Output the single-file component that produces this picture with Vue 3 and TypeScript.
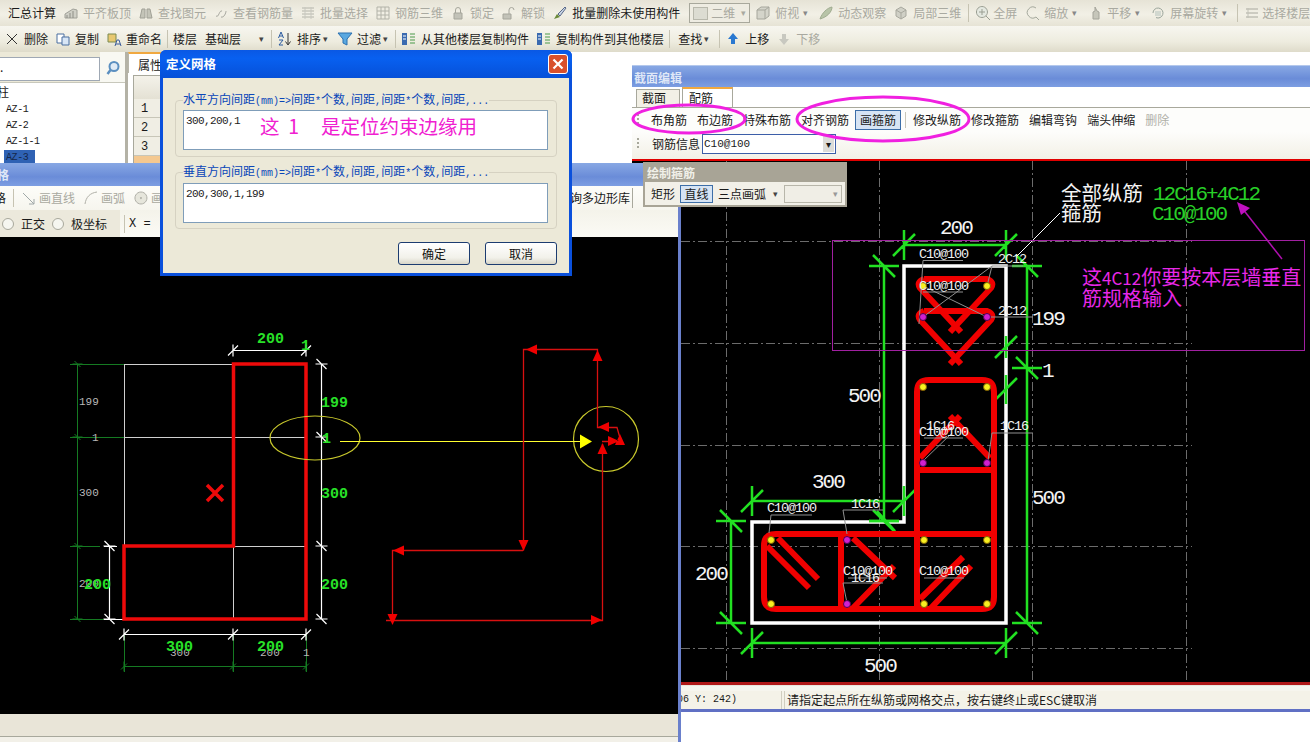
<template>
  <div class="app">
    <!-- top toolbars -->
    <div class="bar bar1">
      <template v-for="(it, i) in bar1" :key="i">
        <span v-if="it.sep" class="sep"></span>
        <span v-else-if="it.combo" class="combo"><i class="combo-box"></i>{{ it.label }}<i class="combo-arrow">▾</i></span>
        <span v-else class="item" :class="{ off: it.off, tight: it.tight }">
          <svg v-if="it.icon" class="ico" viewBox="0 0 16 16"><path v-for="(p, k) in icons[it.icon]" :key="k" :d="p.d" :fill="p.f || 'none'" :stroke="p.s || 'none'" /></svg>
          <span>{{ it.label }}</span>
          <i v-if="it.caret" class="caret">▾</i>
        </span>
      </template>
    </div>
    <div class="bar bar2">
      <template v-for="(it, i) in bar2" :key="i">
        <span v-if="it.sep" class="sep"></span>
        <span v-else-if="it.combo" class="floor">{{ it.label }}<i class="caret">▾</i></span>
        <span v-else class="item" :class="{ off: it.off, wide: it.wide }">
          <svg v-if="it.icon" class="ico" viewBox="0 0 16 16"><path v-for="(p, k) in icons[it.icon]" :key="k" :d="p.d" :fill="p.f || 'none'" :stroke="p.s || 'none'" /></svg>
          <span>{{ it.label }}</span>
          <i v-if="it.caret" class="caret">▾</i>
        </span>
      </template>
    </div>

    <div class="desk">
      <!-- component list -->
      <div class="list-pane">
        <div class="search">
          <div class="search-box">.</div>
          <svg class="lens" viewBox="0 0 16 16"><circle cx="9" cy="6.5" r="4.5" fill="#dfeaf5" stroke="#5b8fc0" stroke-width="2" /><path d="M5.5 10 2.5 14" stroke="#5b8fc0" stroke-width="2.5" /></svg>
        </div>
        <div class="tree">
          <div class="root">柱</div>
          <div v-for="n in ['AZ-1', 'AZ-2', 'AZ-1-1']" :key="n" class="leaf">{{ n }}</div>
          <div class="leaf"><span class="picked">AZ-3</span></div>
        </div>
      </div>

      <!-- properties tab behind the dialog -->
      <div class="props">
        <div class="props-tab">属性</div>
        <div class="props-grid">
          <div class="props-head"></div>
          <div v-for="n in 3" :key="n" class="props-row">{{ n }}</div>
          <div class="props-row now"></div>
        </div>
      </div>

      <!-- section editor -->
      <div class="section-win">
        <div class="title sec-title">截面编辑</div>
        <div class="tabs">
          <span class="tab">截面</span>
          <span class="tab on">配筋</span>
        </div>
        <div class="sec-tools">
          <i class="grip"></i>
          <span v-for="t in secTools" :key="t.label" class="tool" :class="{ off: t.off, act: t.act, dash: t.dash }">{{ t.label }}</span>
        </div>
        <div class="sec-info">
          <i class="grip"></i>
          <span>钢筋信息</span>
          <span class="rebar-sel"><span class="mono">C10@100</span><i class="sel-btn">▾</i></span>
        </div>
        <div class="red-line"></div>
        <svg class="cad sec-cad" viewBox="632 160 678 521">
          <path :d="gridPath" class="grid" />
          <path :d="whiteOutline" class="wall" />
          <path :d="greenDims" class="dim-g" />
          <path d="M995 357 1017 335M995 399 1017 377M1006 335V357M1006 374V403M869 520H899M877 510 895 530" class="dim-g" />
          <path :d="rebarPath" class="rebar" />
          <path :d="leaderPath" class="leader" />
          <path d="M1017 255 1060 212" class="white-thin" />
          <g v-for="(d, i) in secDots" :key="i">
            <circle :cx="d[0]" :cy="d[1]" r="3.5" :class="d[2] ? 'dot-p' : 'dot-y'" />
          </g>
          <rect x="832.5" y="239.5" width="472" height="110" class="note-box" />
          <path d="M1282 258 1242 207" class="note-line" />
          <path d="M1237 201 1250 207 1241 214Z" fill="#c010c0" />
          <text v-for="(t, i) in secText" :key="i" :x="t.x" :y="t.y" :class="t.c">{{ t.t }}</text>
          <text x="1061" y="200" class="cjk-w">全部纵筋</text>
          <text x="1061" y="220" class="cjk-w">箍筋</text>
          <text x="1082" y="284" class="cjk-m">这<tspan class="cjk-lat">4C12</tspan>你要按本层墙垂直</text>
          <text x="1082" y="305" class="cjk-m">筋规格输入</text>
        </svg>
        <div class="red-end"></div>
        <div class="status">
          <span class="st-pos mono">(X: 306 Y: 242)</span>
          <span class="st-msg">请指定起点所在纵筋或网格交点，按右键终止或ESC键取消</span>
        </div>
      </div>

      <!-- floating stirrup palette -->
      <div class="palette">
        <div class="pal-title">绘制箍筋</div>
        <div class="pal-body">
          <span>矩形</span>
          <span class="pal-act">直线</span>
          <span>三点画弧</span>
          <i class="caret">▾</i>
          <span class="pal-sel">▾</span>
        </div>
      </div>

      <!-- polygon editor -->
      <div class="draw-win">
        <div class="title draw-title">格</div>
        <div class="draw-tools">
          <span class="cut">格</span>
          <span class="sep"></span>
          <span v-for="t in drawTools" :key="t.label" class="item off">
            <svg class="ico" viewBox="0 0 16 16"><path v-for="(p, k) in icons[t.icon]" :key="k" :d="p.d" :fill="p.f || 'none'" :stroke="p.s || 'none'" /></svg>
            <span>{{ t.label }}</span>
          </span>
          <span class="grow"></span>
          <span class="poly-lib">查询多边形库</span>
        </div>
        <div class="draw-opts">
          <span class="opts-left">
            <i class="radio"></i><span>正交</span>
            <i class="radio"></i><span>极坐标</span>
          </span>
          <span class="sep"></span>
          <span class="mono">X =</span>
          <i class="coord"></i>
        </div>
        <svg class="cad draw-cad" viewBox="0 237 678 477">
          <path d="M124.500 364V546M233.500 546V619M124 364.500H233M124 437.500H306M233 546.500H306" class="grey-line" />
          <path d="M70 364.500H124M70 437.500H124M70 546.500H100M70 619.500H104M124.500 634V672M233.500 634V672M306.500 634V672" class="dark-line" />
          <path :d="darkDims" class="dark-line" />
          <path :d="whiteDims" class="white-line" />
          <path d="M104 546.500H117M104 619.500H124" class="white-line" />
          <path d="M233.500 364H306V619H124V546H233.500Z" class="outline" />
          <path d="M207 485 223 501M223 485 207 501" class="outline" />
          <ellipse cx="315" cy="438" rx="45" ry="22" class="yellow-ring" />
          <circle cx="606" cy="439" r="32.500" class="yellow-ring" />
          <path d="M340 441.500H582" class="yellow-arrow" />
          <path d="M592 441.500 580 434.500V448.500Z" fill="#ffff00" />
          <path :d="loopPath" class="loop" />
          <path :d="loopHeads" fill="#f00000" />
          <text v-for="(t, i) in drawText" :key="i" :x="t.x" :y="t.y" :class="t.c">{{ t.t }}</text>
        </svg>
        <div class="draw-foot"></div>
      </div>

      <!-- hand drawn rings over the section toolbar -->
      <svg class="rings" viewBox="0 0 1310 690">
        <ellipse cx="689" cy="67" rx="56" ry="14" />
        <ellipse cx="883" cy="67" rx="86" ry="22" />
      </svg>

      <!-- define grid dialog -->
      <div class="dialog">
        <div class="dlg-title">
          <span>定义网格</span>
          <span class="dlg-close">
            <svg viewBox="0 0 12 12"><path d="M1.500 1.500 10.500 10.500M10.500 1.500 1.500 10.500" stroke="#fff" stroke-width="2.200" /></svg>
          </span>
        </div>
        <div class="dlg-body">
          <fieldset class="grp">
            <legend><span v-for="(p, i) in legendParts('水平方向间距(mm)=>间距*个数,间距,间距*个数,间距,...')" :key="i" :class="{ lat: p.lat }">{{ p.text }}</span></legend>
            <div class="memo">
              <span class="mono memo-text">300,200,1</span>
              <span class="memo-note">这&nbsp;&nbsp;1&nbsp;&nbsp;&nbsp;&nbsp;&nbsp;是定位约束边缘用</span>
            </div>
          </fieldset>
          <fieldset class="grp">
            <legend><span v-for="(p, i) in legendParts('垂直方向间距(mm)=>间距*个数,间距,间距*个数,间距,...')" :key="i" :class="{ lat: p.lat }">{{ p.text }}</span></legend>
            <div class="memo">
              <span class="mono memo-text">200,300,1,199</span>
            </div>
          </fieldset>
          <div class="dlg-btns">
            <button type="button">确定</button>
            <button type="button">取消</button>
          </div>
        </div>
      </div>
    </div>
  </div>
</template>

<script setup lang="ts">
import { computed } from 'vue'

interface Shape { d: string; f?: string; s?: string }
interface BarItem {
  label?: string
  icon?: string
  off?: boolean
  caret?: boolean
  sep?: boolean
  combo?: boolean
  tight?: boolean
  wide?: boolean
}

// small hand drawn toolbar icons, 16x16
const icons: Record<string, Shape[]> = {
  slab: [{ d: 'M2 13V9l8-5 4 1v8Z', f: '#cfcfc6', s: '#a0a098' }, { d: 'M4 13V10M7 13V8M10 13V6', s: '#8e8e86' }],
  binoc: [{ d: 'M2 13l2-9h3v9ZM9 13V4h3l2 9Z', f: '#c4c4b8', s: '#a0a096' }],
  rebar: [{ d: 'M3 11c3 2 3-6 6-5M8 12c3 1 5-4 5-6', s: '#a8a8a0' }],
  list: [{ d: 'M2 3h12M2 6h12M2 9h12M2 12h12', s: '#b4b4aa' }, { d: 'M5 2v12M11 2v12', s: '#c8c8c0' }],
  cube: [{ d: 'M2 2h12v12H2ZM6 2v12M10 2v12M2 6h12M2 10h12', s: '#b2b2a8' }],
  lock: [{ d: 'M4 8h8v6H4Z', f: '#c2c2b8', s: '#a6a69c' }, { d: 'M5.500 8V5a2.500 2.500 0 0 1 5 0v3', s: '#a6a69c' }],
  unlock: [{ d: 'M2 9h8v5H2Z', f: '#c2c2b8', s: '#a6a69c' }, { d: 'M8 9V5a2.500 2.500 0 0 1 5 0', s: '#a6a69c' }],
  brush: [{ d: 'M2 14l3-5 3 3Z', f: '#6a8a3a' }, { d: 'M6 9l7-7 1 1-6 8Z', f: '#c8d4e4', s: '#5a6a8a' }],
  box: [{ d: 'M2 5l4-3h8v9l-4 3H2Z', f: '#d4d4ca', s: '#a6a69c' }, { d: 'M2 5h8v9M10 5l4-3', s: '#a6a69c' }],
  orbit: [{ d: 'M2 14C4 8 9 3 14 2c0 5-5 10-12 12Z', f: '#b8c4a8', s: '#a0ac90' }],
  part: [{ d: 'M8 2l5 3v6l-5 3-5-3V5Z', f: '#d0d0c6', s: '#a8a89e' }, { d: 'M3 5l5 3 5-3M8 8v6', s: '#a8a89e' }],
  zoomfull: [{ d: 'M7 1.500a5.500 5.500 0 1 1-.1 0Z', f: '#e4e8e0', s: '#9a9e92' }, { d: 'M7 4v6M4 7h6M11 11l4 4', s: '#9a9e92' }],
  zoom: [{ d: 'M12 3a5.500 5.500 0 1 0 0 9', s: '#a4a89c' }, { d: 'M12 12l3 3', s: '#a4a89c' }],
  pan: [{ d: 'M6 14V7l2-1V2l2 4 2 1v7Z', f: '#c6c6ba', s: '#a4a49a' }],
  rotate: [{ d: 'M3 8a5 5 0 1 1 3 4.600', s: '#9aa49a' }, { d: 'M5 6h6v5H5Z', f: '#d2d8d0' }],
  floor: [{ d: 'M2 4h12M2 8h12M2 12h12', s: '#a8a89e' }, { d: 'M4 3v10', s: '#c2c2b8' }],
  cross: [{ d: 'M3 3l10 10M13 3 3 13', s: '#333333' }],
  copy: [{ d: 'M2 3h7v9H2Z', f: '#fff', s: '#4a6ea0' }, { d: 'M7 6h7v8H7Z', f: '#d8e6f6', s: '#4a6ea0' }],
  rename: [{ d: 'M2 3h8v8H2Z', f: '#e8c870', s: '#7a8a50' }, { d: 'M9 15l2-6 2 0 2 6M10 13h4', s: '#3a5a9a' }],
  sort: [{ d: 'M1.500 7 4 1l2.500 6M2.500 5h3M2 9h4l-4 5h4', s: '#2a5aa0' }, { d: 'M11 2v11M8.500 10.500 11 14l2.500-3.500', s: '#333333' }],
  funnel: [{ d: 'M1 2h14L10 8v6l-4-2V8Z', f: '#5aa8e0', s: '#2a70b0' }],
  layers: [{ d: 'M1 2h5v12H1Z', f: '#3a6ab0' }, { d: 'M2 5h3M2 8h3', s: '#fff' }, { d: 'M9 3h5M9 6h5M9 9h5M9 12h5', s: '#4a9a4a' }],
  up: [{ d: 'M8 2l5 6h-3v5H6V8H3Z', f: '#2a78d0' }],
  down: [{ d: 'M8 14 3 8h3V3h4v5h3Z', f: '#c8c8c0' }],
  line: [{ d: 'M2 3l11 11M13 14v-5M13 14H8', s: '#a0a8a8' }],
  arc: [{ d: 'M2 14C3 7 7 3 14 2', s: '#b0b0a8', }],
  circle: [{ d: 'M8 2a6 6 0 1 1-.1 0Z', f: '#e6e6dc', s: '#b0b0a8' }, { d: 'M8 7a1 1 0 1 1-.1 0Z', f: '#b0b0a8' }],
}

const bar1: BarItem[] = [
  { label: '汇总计算' },
  { label: '平齐板顶', icon: 'slab', off: true },
  { label: '查找图元', icon: 'binoc', off: true },
  { label: '查看钢筋量', icon: 'rebar', off: true },
  { label: '批量选择', icon: 'list', off: true },
  { label: '钢筋三维', icon: 'cube', off: true },
  { label: '锁定', icon: 'lock', off: true },
  { label: '解锁', icon: 'unlock', off: true },
  { label: '批量删除未使用构件', icon: 'brush' },
  { label: '二维', combo: true },
  { label: '俯视', icon: 'box', off: true, caret: true },
  { label: '动态观察', icon: 'orbit', off: true },
  { label: '局部三维', icon: 'part', off: true },
  { sep: true },
  { label: '全屏', icon: 'zoomfull', off: true, tight: true },
  { label: '缩放', icon: 'zoom', off: true, caret: true },
  { label: '平移', icon: 'pan', off: true, caret: true },
  { label: '屏幕旋转', icon: 'rotate', off: true, caret: true },
  { sep: true },
  { label: '选择楼层', icon: 'floor', off: true, tight: true },
]

const bar2: BarItem[] = [
  { label: '删除', icon: 'cross' },
  { label: '复制', icon: 'copy' },
  { label: '重命名', icon: 'rename' },
  { sep: true },
  { label: '楼层' },
  { label: '基础层', combo: true },
  { sep: true },
  { label: '排序', icon: 'sort', caret: true },
  { label: '过滤', icon: 'funnel', caret: true },
  { sep: true },
  { label: '从其他楼层复制构件', icon: 'layers' },
  { label: '复制构件到其他楼层', icon: 'layers' },
  { sep: true },
  { label: '查找', caret: true, wide: true },
  { sep: true },
  { label: '上移', icon: 'up' },
  { label: '下移', icon: 'down', off: true },
]

const secTools = [
  { label: '布角筋' },
  { label: '布边筋' },
  { label: '特殊布筋' },
  { label: '对齐钢筋' },
  { label: '画箍筋', act: true },
  { label: '修改纵筋', dash: true },
  { label: '修改箍筋' },
  { label: '编辑弯钩' },
  { label: '端头伸缩' },
  { label: '删除', off: true },
]

const drawTools = [
  { label: '画直线', icon: 'line' },
  { label: '画弧', icon: 'arc' },
  { label: '画圆', icon: 'circle' },
]

// legends mix half width latin with chinese, the latin runs get their own class
const legendParts = (s: string) =>
  (s.match(/[\x00-\x7f]+|[^\x00-\x7f]+/g) || []).map((text) => ({
    text,
    lat: text.charCodeAt(0) < 128,
  }))

interface Dim { axis: 'h' | 'v'; at: number; stops: number[] }

// a dimension line with a cross tick at every stop
const dimPath = (dims: Dim[], ext: number, slash: number) =>
  dims
    .map((d) => {
      const a = d.stops[0]
      const b = d.stops[d.stops.length - 1]
      if (d.axis === 'h') {
        return `M${a} ${d.at}H${b}` + d.stops
          .map((s) => `M${s} ${d.at - ext}V${d.at + ext}M${s - slash} ${d.at + slash}L${s + slash} ${d.at - slash}`)
          .join('')
      }
      return `M${d.at} ${a}V${b}` + d.stops
        .map((s) => `M${d.at - ext} ${s}H${d.at + ext}M${d.at - slash} ${s - slash}L${d.at + slash} ${s + slash}`)
        .join('')
    })
    .join('')

const greenDims = computed(() =>
  dimPath(
    [
      { axis: 'h', at: 244, stops: [904, 1006] },
      { axis: 'v', at: 884, stops: [265, 520] },
      { axis: 'v', at: 1027, stops: [265, 367, 622] },
      { axis: 'v', at: 731, stops: [520, 622] },
      { axis: 'h', at: 500, stops: [752, 904] },
      { axis: 'h', at: 642, stops: [752, 1006] },
    ],
    15,
    11,
  ),
)

const whiteDims = computed(() =>
  dimPath(
    [
      { axis: 'v', at: 321.5, stops: [364, 437, 546, 619] },
      { axis: 'v', at: 109.5, stops: [546, 619] },
      { axis: 'h', at: 350.5, stops: [233, 306] },
      { axis: 'h', at: 634.5, stops: [124, 233, 306] },
    ],
    6,
    5,
  ),
)

const darkDims = computed(() =>
  dimPath(
    [
      { axis: 'v', at: 77.5, stops: [364, 437, 546, 619] },
      { axis: 'h', at: 666.5, stops: [124, 233, 306] },
    ],
    5,
    3,
  ),
)

const gridPath = computed(() => {
  let d = ''
  for (const x of [726.5, 879.5, 1032.5, 1186.5]) d += `M${x} 160V681`
  for (const y of [240.5, 342.5, 444.5, 545.5, 647.5]) d += `M681 ${y}H1192`
  return d
})

const whiteOutline = 'M904 265H1006V622H752V521H904Z'

const rebarPath = [
  // L shaped outer stirrup with the cross walls
  'M917 533V391Q917 379 929 379H982Q994 379 994 391V596Q994 608 982 608H776Q764 608 764 596V545Q764 533 776 533H994',
  'M917 533V608M841 533V608M917 469H994',
  // upper stirrups
  'M924 278H987Q995 281 991 287L950 331M924 278Q916 281 920 287L961 331',
  'M924 310H987Q995 313 991 319L950 363M924 310Q916 313 920 319L961 363',
  // hooks
  'M920 457 960 415M990 457 950 415',
  'M778 537 818 578M767 545 809 587',
  'M853 537 895 577M853 607 894 565',
  'M920 598 963 556M930 608 971 565',
].join('')

const leaderPath = [
  'M963 259.500H923L919 323',
  'M963 291H923M923 285 987 316',
  'M1023 265H992L923 316M992 265 987 285',
  'M1033 316H987',
  'M1033 432H992L988 460',
  'M963 437H924M952 432 923 460',
  'M812 514H771L769 532',
  'M883 509H843L847 533',
  'M887 577H848',
  'M883 582H843L847 602',
  'M964 577H924',
].join('')

// [x, y, isPurple]
const secDots: [number, number, boolean][] = [
  [923, 285, false], [987, 285, false], [923, 316, true], [987, 316, true],
  [923, 386, false], [987, 386, false], [923, 462, true], [987, 462, true],
  [771, 539, false], [771, 603, false], [847, 539, true], [847, 603, true],
  [924, 539, false], [987, 539, false], [924, 603, false], [987, 603, false],
]

const secText = [
  { x: 940, y: 233, t: '200', c: 'big' },
  { x: 1032, y: 324, t: '199', c: 'big' },
  { x: 1042, y: 376, t: '1', c: 'big' },
  { x: 848, y: 401, t: '500', c: 'big' },
  { x: 812, y: 487, t: '300', c: 'big' },
  { x: 1032, y: 503, t: '500', c: 'big' },
  { x: 695, y: 579, t: '200', c: 'big' },
  { x: 864, y: 671, t: '500', c: 'big' },
  { x: 1153, y: 199, t: '12C16+4C12', c: 'big green' },
  { x: 1152, y: 219, t: 'C10@100', c: 'big green' },
  { x: 919, y: 257, t: 'C10@100', c: 'tiny' },
  { x: 919, y: 289, t: 'C10@100', c: 'tiny' },
  { x: 998, y: 262, t: '2C12', c: 'tiny' },
  { x: 998, y: 314, t: '2C12', c: 'tiny' },
  { x: 926, y: 429, t: '1C16', c: 'tiny' },
  { x: 919, y: 435, t: 'C10@100', c: 'tiny' },
  { x: 1000, y: 429, t: '1C16', c: 'tiny' },
  { x: 767, y: 511, t: 'C10@100', c: 'tiny' },
  { x: 851, y: 507, t: '1C16', c: 'tiny' },
  { x: 843, y: 574, t: 'C10@100', c: 'tiny' },
  { x: 851, y: 581, t: '1C16', c: 'tiny' },
  { x: 919, y: 574, t: 'C10@100', c: 'tiny' },
]

const drawText = [
  { x: 79, y: 405, t: '199', c: 'thin' },
  { x: 92, y: 441, t: '1', c: 'thin' },
  { x: 79, y: 496, t: '300', c: 'thin' },
  { x: 79, y: 587, t: '200', c: 'thin' },
  { x: 170, y: 656, t: '300', c: 'thin' },
  { x: 260, y: 656, t: '200', c: 'thin' },
  { x: 303, y: 656, t: '1', c: 'thin' },
  { x: 257, y: 343, t: '200', c: 'lime' },
  { x: 301, y: 350, t: '1', c: 'lime' },
  { x: 321, y: 407, t: '199', c: 'lime' },
  { x: 322, y: 443, t: '1', c: 'lime' },
  { x: 321, y: 498, t: '300', c: 'lime' },
  { x: 84, y: 589, t: '200', c: 'lime' },
  { x: 321, y: 589, t: '200', c: 'lime' },
  { x: 166, y: 651, t: '300', c: 'lime' },
  { x: 257, y: 651, t: '200', c: 'lime' },
]

// the red loop traced round the section
const loopPath =
  'M386 620.500H602.500V444M392.500 620V550.500H523M523.500 550.500V349.500H597.500V427.500H617L620 438M602 441.500H620'

const arrow = (x: number, y: number, dx: number, dy: number) => {
  const len = 11
  const w = 5
  return `M${x} ${y}L${x - dx * len - dy * w} ${y - dy * len - dx * w}L${x - dx * len + dy * w} ${y - dy * len + dx * w}Z`
}

const loopHeads = [
  arrow(392.5, 625, 0, 1),
  arrow(393, 550.5, -1, 0),
  arrow(523.5, 551, 0, 1),
  arrow(526, 349.5, -1, 0),
  arrow(597.5, 350, 0, -1),
  arrow(598, 427, -1, 0),
  arrow(620, 434, 0, -1),
  arrow(619, 441, 1, 0),
  arrow(602.5, 443, 0, -1),
  arrow(602, 620, 1, 0),
].join('')
</script>

<style>
html, body {
  margin: 0;
  background: #fff;
}
</style>

<style scoped>
.app {
  width: 1310px;
  height: 742px;
  display: flex;
  flex-direction: column;
  overflow: hidden;
  background: #fff;
  color: #1a1a1a;
  font: 12px/16px "Noto Sans CJK SC", "Liberation Sans", sans-serif;
}
.mono {
  font-family: "Liberation Mono", monospace;
}
.bar {
  display: flex;
  align-items: center;
  gap: 7px;
  white-space: nowrap;
  overflow: hidden;
  flex: none;
  height: 26px;
}
.bar1 {
  padding-left: 8px;
  background: linear-gradient(#e6e3d6, #f2f0e6 55%, #e6e3d5);
}
.bar2 {
  padding-left: 4px;
  background: linear-gradient(#f7f6f0, #eeecdf 60%, #dedbca);
}
.item {
  display: flex;
  align-items: center;
  gap: 4px;
  flex: none;
}
.item.off {
  color: #a9a9a0;
}
.item.tight {
  gap: 2px;
  margin-left: -1px;
}
.item.wide {
  margin: 0 3px;
}
.ico {
  width: 16px;
  height: 16px;
  flex: none;
}
.caret {
  font-style: normal;
  font-size: 9px;
  width: 12px;
  margin-left: -4px;
  text-align: center;
  color: #444;
}
.bar2 .caret {
  width: 9px;
}
.item.off .caret {
  color: #888;
}
.sep {
  width: 1px;
  height: 18px;
  background: #c6c3b2;
  flex: none;
}
.bar2 .sep {
  margin: 0 -2px;
}
.combo {
  position: relative;
  width: 61px;
  height: 20px;
  margin: 0 -2px 0 2px;
  box-sizing: border-box;
  border: 1px solid #a8a89c;
  background: #eeece2;
  color: #a9a9a0;
  display: flex;
  align-items: center;
  flex: none;
  padding-left: 3px;
}
.combo-box {
  width: 13px;
  height: 11px;
  border: 1px solid #b8b8ac;
  background: #dcdcd2;
  margin-right: 3px;
}
.combo-arrow {
  font-style: normal;
  font-size: 9px;
  margin-left: 6px;
}
.floor {
  width: 61px;
  display: flex;
  justify-content: space-between;
  margin-left: 1px;
  flex: none;
}
.floor .caret {
  width: 10px;
  margin: 0;
}

.desk {
  position: relative;
  flex: 1;
  background: #fff;
}
.list-pane {
  position: absolute;
  left: 0;
  top: 0;
  width: 125px;
  height: 111px;
  border-right: 3px solid #b4b2a6;
  display: flex;
  flex-direction: column;
  background: #fff;
  overflow: hidden;
}
.search {
  height: 30px;
  flex: none;
  display: flex;
  align-items: center;
  background: linear-gradient(90deg, #ece9d8 0 100px, #f8f8f2 100px);
  border-bottom: 1px solid #c8c8bc;
}
.search-box {
  width: 100px;
  height: 24px;
  box-sizing: border-box;
  margin-top: 3px;
  background: #fff;
  border: 1px solid #9fa8b4;
  border-left: none;
  line-height: 18px;
}
.lens {
  width: 16px;
  height: 16px;
  margin: 2px 0 0 5px;
}
.tree {
  font-size: 12px;
  line-height: 16px;
}
.root {
  height: 19px;
  line-height: 17px;
  margin-left: -3px;
}
.leaf {
  height: 16px;
  padding-left: 6px;
  font-family: "Liberation Mono", monospace;
  font-size: 10px;
  letter-spacing: -0.4px;
}
.picked {
  display: inline-block;
  width: 31px;
  height: 16px;
  margin-left: -2px;
  padding-left: 2px;
  box-sizing: border-box;
  background: #2f62b4;
  color: #16284a;
}
.props {
  position: absolute;
  left: 128px;
  top: 0;
  width: 44px;
  height: 111px;
  background: #fff;
  overflow: hidden;
}
.props-tab {
  height: 21px;
  padding-left: 9px;
  line-height: 22px;
  font-size: 12px;
  border-top: 2px solid #f0a840;
  box-sizing: border-box;
  border-left: 1px solid #b8b6aa;
}
.props-grid {
  margin: 2px 0 0 5px;
  border-left: 1px solid #a8a89c;
  border-top: 1px solid #a8a89c;
}
.props-head {
  height: 23px;
  background: linear-gradient(#f4f2ea, #e4e1d4);
}
.props-row {
  height: 18px;
  border-bottom: 1px solid #c8c6b8;
  background: #f0eee4;
  padding-left: 7px;
  line-height: 20px;
  font-family: "Liberation Mono", monospace;
  font-size: 12px;
}
.props-row.now {
  background: #f4c890;
}

.section-win {
  position: absolute;
  left: 632px;
  top: 13px;
  width: 678px;
  height: 646px;
  display: flex;
  flex-direction: column;
  background: #fff;
}
.title {
  flex: none;
  color: #dfe7f7;
  font-weight: 700;
  background: linear-gradient(#88a8e4, #6a8cd8 60%, #7d9ee2);
}
.sec-title {
  height: 22px;
  line-height: 23px;
  padding-left: 2px;
  font-size: 12px;
  border-top: 1px solid #b4c8ec;
  box-sizing: border-box;
}
.tabs {
  height: 20px;
  flex: none;
  display: flex;
  align-items: flex-end;
  gap: 2px;
  padding-left: 4px;
  border-bottom: 1px solid #a8a89c;
  background: #fff;
}
.tab {
  width: 44px;
  height: 18px;
  box-sizing: border-box;
  border: 1px solid #a8a89c;
  border-bottom: none;
  padding-left: 5px;
  background: #f2f0e6;
}
.tab.on {
  width: 51px;
  height: 20px;
  background: #fff;
  border-top: 2px solid #f0a840;
  padding-left: 6px;
  line-height: 18px;
}
.sec-tools {
  height: 24px;
  flex: none;
  display: flex;
  align-items: center;
  gap: 10px;
  padding-left: 5px;
  background: #fdfdfb;
}
.grip {
  width: 2px;
  height: 12px;
  margin-right: 2px;
  flex: none;
  background: repeating-linear-gradient(#a8a89c 0 2px, transparent 2px 4px);
}
.tool {
  flex: none;
}
.tool.off {
  color: #b0b0a8;
}
.tool.act {
  margin-left: -4px;
  padding: 1px 4px;
  border: 1px solid #3c6ea8;
  background: #d6e4f4;
}
.tool.dash {
  margin-left: -6px;
  padding-left: 7px;
  border-left: 1px solid #c8c6b8;
}
.sec-info {
  height: 27px;
  flex: none;
  box-sizing: border-box;
  padding: 0 0 3px 5px;
  display: flex;
  align-items: center;
  gap: 2px;
  background: linear-gradient(#fdfdfb, #f2f0e6);
}
.sec-info .grip {
  margin-right: 11px;
}
.rebar-sel {
  width: 134px;
  height: 20px;
  box-sizing: border-box;
  border: 1px solid #3c5ea8;
  background: #fff;
  display: flex;
  align-items: center;
  justify-content: space-between;
  padding-left: 1px;
  font-size: 11px;
}
.sel-btn {
  font-style: normal;
  font-size: 10px;
  width: 11px;
  height: 16px;
  margin-right: 1px;
  background: #dcdcd8;
  text-align: center;
}
.red-line {
  height: 2px;
  flex: none;
  background: #e00000;
}
.cad {
  display: block;
  flex: none;
  background: #000;
  font-family: "Liberation Mono", monospace;
}
.sec-cad {
  width: 678px;
  height: 521px;
}
.grid {
  fill: none;
  stroke: #6c6c6c;
  stroke-dasharray: 9 3 2 3;
  shape-rendering: crispEdges;
}
.wall {
  fill: none;
  stroke: #fff;
  stroke-width: 3.5px;
}
.dim-g {
  fill: none;
  stroke: #22e022;
  stroke-width: 2.5px;
}
.rebar {
  fill: none;
  stroke: #f00000;
  stroke-width: 6px;
}
.leader {
  fill: none;
  stroke: #909090;
}
.white-thin {
  stroke: #fff;
}
.dot-y {
  fill: #f8f020;
  stroke: #806000;
}
.dot-p {
  fill: #d020d0;
  stroke: #500050;
}
.note-box {
  fill: none;
  stroke: #a020a0;
}
.note-line {
  stroke: #b010b0;
  stroke-width: 1.500px;
}
.big {
  font-size: 21px;
  letter-spacing: -2px;
  fill: #f4f4f4;
}
.green {
  fill: #28d028;
}
.tiny {
  font-size: 13.500px;
  letter-spacing: -1.100px;
  fill: #f0f0f0;
}
.cjk-w {
  font: 20.500px "Noto Sans CJK SC", sans-serif;
  fill: #f4f4f4;
}
.cjk-m {
  font: 20px "Noto Sans CJK SC", sans-serif;
  fill: #e828e8;
}
.cjk-lat {
  font-size: 17px;
}
.red-end {
  height: 9px;
  flex: none;
  background: linear-gradient(#b01818 0 3px, #e8e6dc 3px 4px, #f6f5ee 4px);
}
.status {
  height: 18px;
  flex: none;
  display: flex;
  background: #f4f2e8;
  line-height: 18px;
  font-size: 12px;
  border-bottom: 3px solid #6070c4;
}
.st-pos {
  width: 150px;
  text-align: right;
  padding-right: 44px;
  box-sizing: border-box;
  border-right: 1px solid #d0cec0;
  font-size: 10px;
}
.st-msg {
  margin-left: 2px;
  padding-left: 2px;
  border-left: 1px solid #d0cec0;
}

.palette {
  position: absolute;
  z-index: 3;
  left: 643px;
  top: 110px;
  width: 204px;
  height: 45px;
  box-sizing: border-box;
  border: 2px solid #a8a496;
  display: flex;
  flex-direction: column;
  background: #f2f0e8;
  white-space: nowrap;
}
.pal-title {
  height: 18px;
  flex: none;
  background: #a8a496;
  color: #f0f0e8;
  font-weight: 700;
  padding-left: 2px;
  line-height: 18px;
}
.pal-body {
  flex: 1;
  display: flex;
  align-items: center;
  padding-left: 6px;
  gap: 5px;
}
.pal-body > span {
  flex: none;
}
.pal-body .caret {
  width: 8px;
  margin: 0;
  flex: none;
}
.pal-act {
  width: 33px;
  height: 18px;
  box-sizing: border-box;
  border: 1px solid #3c6ea8;
  background: #d6e4f4;
  text-align: center;
  line-height: 16px;
}
.pal-sel {
  width: 58px;
  height: 18px;
  box-sizing: border-box;
  border: 1px solid #b8b6aa;
  background: #f0eee6;
  color: #999;
  font-size: 9px;
  text-align: right;
  padding-right: 3px;
}

.draw-win {
  position: absolute;
  z-index: 2;
  left: 0;
  top: 111px;
  width: 678px;
  height: 579px;
  border-right: 3px solid #6a80cc;
  display: flex;
  flex-direction: column;
  background: #ece9dc;
}
.draw-title {
  height: 23px;
  padding-left: 0;
  line-height: 24px;
  overflow: hidden;
  text-indent: -3px;
}
.draw-tools {
  height: 24px;
  flex: none;
  display: flex;
  align-items: center;
  gap: 7px;
  background: linear-gradient(#fdfdf9, #f6f5ee);
  overflow: hidden;
}
.draw-tools .item {
  gap: 2px;
  margin-right: 1px;
}
.cut {
  margin-left: -6px;
  flex: none;
}
.grow {
  flex: 1;
}
.poly-lib {
  margin-right: 45px;
  padding-right: 2px;
  border-right: 1px solid #a8a89c;
  line-height: 20px;
  flex: none;
}
.draw-opts {
  height: 27px;
  flex: none;
  display: flex;
  align-items: center;
  gap: 4px;
  background: linear-gradient(#f4f3ea, #fbfaf5);
}
.opts-left {
  display: flex;
  align-items: center;
  gap: 7px;
  padding-left: 2px;
  height: 100%;
  width: 120px;
  box-sizing: border-box;
  background: #ece9dc;
}
.radio {
  width: 10px;
  height: 10px;
  border: 1px solid #a8a89c;
  border-radius: 50%;
  background: #f6f6f0;
  flex: none;
}
.coord {
  width: 40px;
  height: 20px;
  margin-left: 6px;
  background: #fff;
  border: 1px solid #a8a89c;
}
.draw-cad {
  width: 678px;
  height: 477px;
}
.grey-line {
  fill: none;
  stroke: #d0d0d0;
}
.dark-line {
  fill: none;
  stroke: #157a22;
}
.white-line {
  fill: none;
  stroke: #fff;
  stroke-width: 1.200px;
}
.outline {
  fill: none;
  stroke: #ee0a0a;
  stroke-width: 3.500px;
}
.yellow-ring {
  fill: none;
  stroke: #c8c82c;
  stroke-width: 1.200px;
}
.yellow-arrow {
  stroke: #ffff30;
}
.loop {
  fill: none;
  stroke: #d81010;
  stroke-width: 1.300px;
}
.thin {
  font-size: 11px;
  fill: #b8b8b8;
}
.lime {
  font-size: 15px;
  font-weight: 700;
  fill: #28e028;
}
.draw-foot {
  flex: 1;
  background: linear-gradient(#e9e5d8 0 22px, #a8a89c 22px 23px, #f2f0e8 23px);
}

.rings {
  position: absolute;
  z-index: 4;
  left: 0;
  top: 0;
  width: 1310px;
  height: 690px;
  pointer-events: none;
  fill: none;
  stroke: #f020e0;
  stroke-width: 3px;
}

.dialog {
  position: absolute;
  z-index: 5;
  left: 160px;
  top: -2px;
  width: 412px;
  height: 226px;
  display: flex;
  flex-direction: column;
  box-sizing: border-box;
  border-radius: 6px 6px 0 0;
  background: #0a50dc;
  padding: 0 3px 3px;
}
.dlg-title {
  height: 28px;
  flex: none;
  display: flex;
  align-items: center;
  justify-content: space-between;
  color: #fff;
  font-weight: 700;
  font-size: 12.500px;
  background: linear-gradient(#0a58e4, #0860f0 30%, #0650d8);
  margin: 0 -3px;
  padding: 0 4px 0 6px;
  border-radius: 6px 6px 0 0;
}
.dlg-close {
  width: 20px;
  height: 20px;
  box-sizing: border-box;
  display: flex;
  align-items: center;
  justify-content: center;
  border: 1px solid #fff;
  border-radius: 3px;
  background: #d8502c;
}
.dlg-close svg {
  width: 12px;
  height: 12px;
}
.dlg-body {
  flex: 1;
  background: #ece9d8;
  display: flex;
  flex-direction: column;
  padding: 15px 12px 0;
}
.grp {
  margin: 0 0 8px;
  padding: 0 8px 0 7px;
  height: 64px;
  flex: none;
  box-sizing: border-box;
  border: 1px solid #d6d2c2;
  border-radius: 4px;
}
.grp legend {
  padding: 0;
  color: #0a46b8;
  font-size: 12px;
  line-height: 12px;
  white-space: nowrap;
}
.lat {
  font-family: "Liberation Mono", monospace;
  font-size: 10px;
}
.memo {
  position: relative;
  height: 40px;
  margin-top: 2px;
  box-sizing: border-box;
  background: #fff;
  border: 1px solid #7f9db9;
  padding: 0 2px;
}
.grp + .grp .memo {
  margin-top: 3px;
}
.memo-text {
  font-size: 11px;
  letter-spacing: -0.6px;
  color: #222;
}
.memo-note {
  position: absolute;
  left: 76px;
  top: 4px;
  color: #f020d0;
  font-size: 19.500px;
  line-height: 22px;
  white-space: nowrap;
}
.dlg-btns {
  display: flex;
  justify-content: flex-end;
  gap: 15px;
  margin-top: 5px;
}
.dlg-btns button {
  width: 72px;
  height: 23px;
  padding: 0;
  border: 1px solid #1c3c70;
  border-radius: 3px;
  background: linear-gradient(#fff, #f2f1ea 70%, #d8d6c8);
  font: 12px "Noto Sans CJK SC", sans-serif;
  color: #111;
}
</style>
